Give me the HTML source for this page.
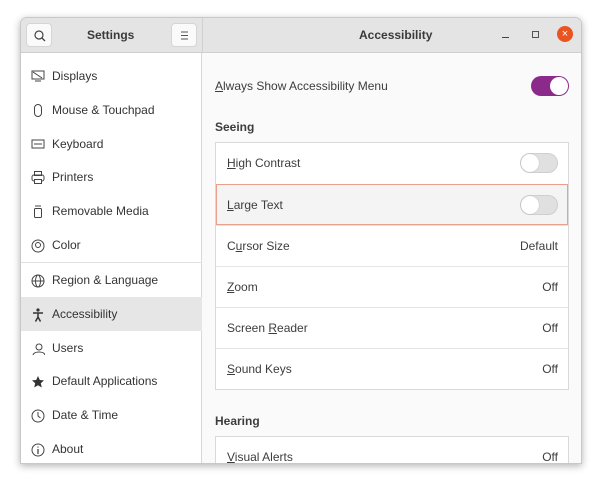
<!DOCTYPE html>
<html><head><meta charset="utf-8"><style>
*{box-sizing:border-box;margin:0;padding:0}
body{width:602px;height:486px;background:#fff;font-family:"Liberation Sans","DejaVu Sans",sans-serif;font-size:12px;color:#3d3d3d;position:relative;overflow:hidden}
.win{position:absolute;left:20px;top:17px;width:562px;height:447px;border:1px solid #c8c8c8;border-radius:7px 7px 0 0;overflow:hidden;box-shadow:0 2px 8px rgba(0,0,0,.3);background:#fafafa}
.hdr{position:absolute;left:0;top:0;width:100%;height:35px;background:#e4e4e4;border-bottom:1px solid #cfcfcf}
.side{position:absolute;left:0;top:35px;width:181px;bottom:0;background:#fff;border-right:1px solid #d8d8d8}
.hsep{position:absolute;left:181px;top:0;height:35px;border-left:1px solid #d0d0d0}
.btn{position:absolute;top:5px;width:26px;height:24px;background:#fafafa;border-radius:4px;border:1px solid #d5d5d5}
.t{position:absolute;font-weight:bold;font-size:12px;color:#3a3a3a}
.it{position:absolute;left:0;width:181px;height:34px;line-height:34px;padding-left:31px;font-size:12px;color:#333}
.it svg{position:absolute;left:10px;top:11px}
.sel{background:#e6e6e6}
.lb{position:absolute;left:194px;width:354px;background:#fff;border:1px solid #d9d9d9}
.row{height:41px;line-height:40px;padding-left:11px;border-top:1px solid #e4e4e4;position:relative}
.row:first-child{border-top:none}
.row .v{position:absolute;right:10px;top:0}
.sw{position:absolute;right:10px;top:10px;width:38px;height:20px;border-radius:10px;background:#e0e0e0;border:1px solid #cfcfcf}
.sw:after{content:"";position:absolute;left:0;top:0;width:18px;height:18px;border-radius:50%;background:#fff;box-shadow:0 0 1px #999}
.hl{background:#f4f4f4;outline:1px solid #e8a08a;outline-offset:-1px}
u{text-decoration:underline}
</style></head><body>
<div class="win">
 <div class="hdr">
  <div class="btn" style="left:5px"><svg width="26" height="24" viewBox="0 0 26 24"><circle cx="12" cy="11" r="4" fill="none" stroke="#444" stroke-width="1.2"/><line x1="15" y1="14" x2="18" y2="17" stroke="#444" stroke-width="1.3"/></svg></div>
  <div class="t" style="left:66px;top:10px">Settings</div>
  <div class="btn" style="left:150px"><svg width="26" height="24"><path d="M9 8h7M9 11.5h7M9 15h7" stroke="#555" stroke-width="1"/></svg></div>
  <div class="hsep"></div>
  <div class="t" style="left:338px;top:10px">Accessibility</div>
  <div style="position:absolute;left:481px;top:19px;width:7px;height:1px;background:#444"></div>
  <div style="position:absolute;left:511px;top:13px;width:7px;height:7px;border:1px solid #555"></div>
  <div style="position:absolute;left:536px;top:8px;width:16px;height:16px;border-radius:50%;background:#e95420;color:#fff;font-size:11px;line-height:16px;text-align:center">×</div>
 </div>
 <div class="side">
  <div class="it" style="top:6px"><svg width="14" height="12"><rect x="1" y="1" width="12" height="8" fill="none" stroke="#444"/><path d="M4 11h6M2 2l9 6" stroke="#444"/></svg>Displays</div>
  <div class="it" style="top:40px"><svg width="14" height="13"><rect x="3.5" y="0.5" width="7" height="12" rx="3.5" fill="none" stroke="#444"/></svg>Mouse &amp; Touchpad</div>
  <div class="it" style="top:74px"><svg width="14" height="12"><rect x="1" y="2" width="12" height="8" fill="none" stroke="#444"/><path d="M3 6h8" stroke="#444"/></svg>Keyboard</div>
  <div class="it" style="top:107px"><svg width="14" height="13"><rect x="1" y="4" width="12" height="6" rx="2" fill="none" stroke="#444"/><rect x="3.5" y="0.5" width="7" height="4" fill="none" stroke="#444"/><rect x="3.5" y="8.5" width="7" height="4" fill="#fff" stroke="#444"/></svg>Printers</div>
  <div class="it" style="top:141px"><svg width="14" height="13"><rect x="3.5" y="3.5" width="7" height="9" rx="1" fill="none" stroke="#444"/><path d="M4 1h6" stroke="#444"/></svg>Removable Media</div>
  <div class="it" style="top:175px"><svg width="14" height="14"><circle cx="7" cy="7" r="6" fill="none" stroke="#444"/><circle cx="7" cy="6" r="2.5" fill="none" stroke="#444"/></svg>Color</div>
  <div style="position:absolute;left:0;top:209px;width:181px;border-top:1px solid #e0e0e0"></div>
  <div class="it" style="top:210px"><svg width="14" height="14"><circle cx="7" cy="7" r="6" fill="none" stroke="#444"/><ellipse cx="7" cy="7" rx="2.5" ry="6" fill="none" stroke="#444"/><path d="M1 7h12" stroke="#444"/></svg>Region &amp; Language</div>
  <div class="it sel" style="top:244px"><svg width="14" height="14"><circle cx="7" cy="2" r="1.6" fill="#333"/><path d="M2 5h10M7 5v4M7 9l-2.5 4.5M7 9l2.5 4.5" stroke="#333" stroke-width="1.5"/></svg>Accessibility</div>
  <div class="it" style="top:278px"><svg width="14" height="14"><circle cx="8" cy="5" r="3" fill="none" stroke="#444"/><path d="M2 13c1-4 11-4 12 0" fill="none" stroke="#444"/></svg>Users</div>
  <div class="it" style="top:311px"><svg width="14" height="14"><path d="M7 1l1.8 4 4.2.4-3.2 2.8 1 4.3L7 10.3 3.2 12.5l1-4.3L1 5.4l4.2-.4z" fill="#333"/></svg>Default Applications</div>
  <div class="it" style="top:345px"><svg width="14" height="14"><circle cx="7" cy="7" r="6" fill="none" stroke="#444"/><path d="M7 3v4l2.5 2" fill="none" stroke="#444"/></svg>Date &amp; Time</div>
  <div class="it" style="top:379px"><svg width="14" height="14"><circle cx="7" cy="7" r="6" fill="none" stroke="#444"/><path d="M7 6v5M7 3.5v1" stroke="#444" stroke-width="1.3"/></svg>About</div>
 </div>
 <div style="position:absolute;left:194px;top:61px"><u>A</u>lways Show Accessibility Menu</div>
 <div style="position:absolute;left:510px;top:58px;width:38px;height:20px;border-radius:10px;background:#8b2a8a"><div style="position:absolute;right:1px;top:1px;width:18px;height:18px;border-radius:50%;background:#fff"></div></div>
 <div style="position:absolute;left:194px;top:102px;font-weight:bold">Seeing</div>
 <div class="lb" style="top:124px">
  <div class="row"><u>H</u>igh Contrast<div class="sw"></div></div>
  <div class="row hl"><u>L</u>arge Text<div class="sw"></div></div>
  <div class="row">C<u>u</u>rsor Size<span class="v">Default</span></div>
  <div class="row"><u>Z</u>oom<span class="v">Off</span></div>
  <div class="row">Screen <u>R</u>eader<span class="v">Off</span></div>
  <div class="row"><u>S</u>ound Keys<span class="v">Off</span></div>
 </div>
 <div style="position:absolute;left:194px;top:396px;font-weight:bold">Hearing</div>
 <div class="lb" style="top:418px;height:40px">
  <div class="row"><u>V</u>isual Alerts<span class="v">Off</span></div>
 </div>
</div>
</body></html>
